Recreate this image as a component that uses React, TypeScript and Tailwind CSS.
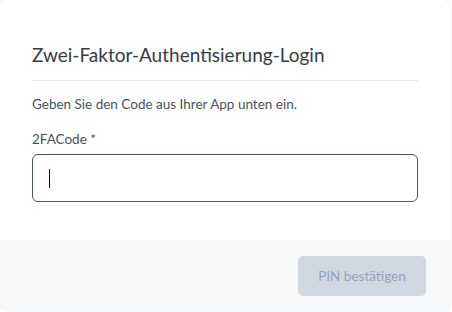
export default function App() {
  return (
    <div className="w-[452px] h-[312px] bg-white" style={{ fontFamily: "Lato, 'Noto Sans', sans-serif" }}>
      <div className="w-[450px] h-[310px] rounded-md bg-white shadow-[0_0_2px_rgba(0,0,0,0.15)] flex flex-col overflow-hidden">
        <div className="flex-1 px-8">
          <h2 className="pt-[41px] pb-[11px] text-[19px] leading-[28px] text-[#353c48] border-b border-[#e2e8f0]">
            Zwei-Faktor-Authentisierung-Login
          </h2>
          <p className="mt-[14px] text-[13.5px] leading-[18px] text-[#4a5260]">
            Geben Sie den Code aus Ihrer App unten ein.
          </p>
          <label className="block mt-[17px] text-[13.5px] leading-[18px] text-[#4a5260]">2FACode *</label>
          <div className="mt-[6px] h-[48px] w-full rounded-[6px] border border-[#48566b] flex items-center px-4">
            <span className="w-px h-[19px] bg-black" />
          </div>
        </div>
        <div className="h-[70px] bg-[#f8f9fb] flex items-start justify-end pt-4 pr-6">
          <button className="w-[128px] h-[40px] rounded-[5px] bg-[#d2d8e2] text-[13.5px] text-[#94a1b5]">
            PIN bestätigen
          </button>
        </div>
      </div>
    </div>
  )
}
